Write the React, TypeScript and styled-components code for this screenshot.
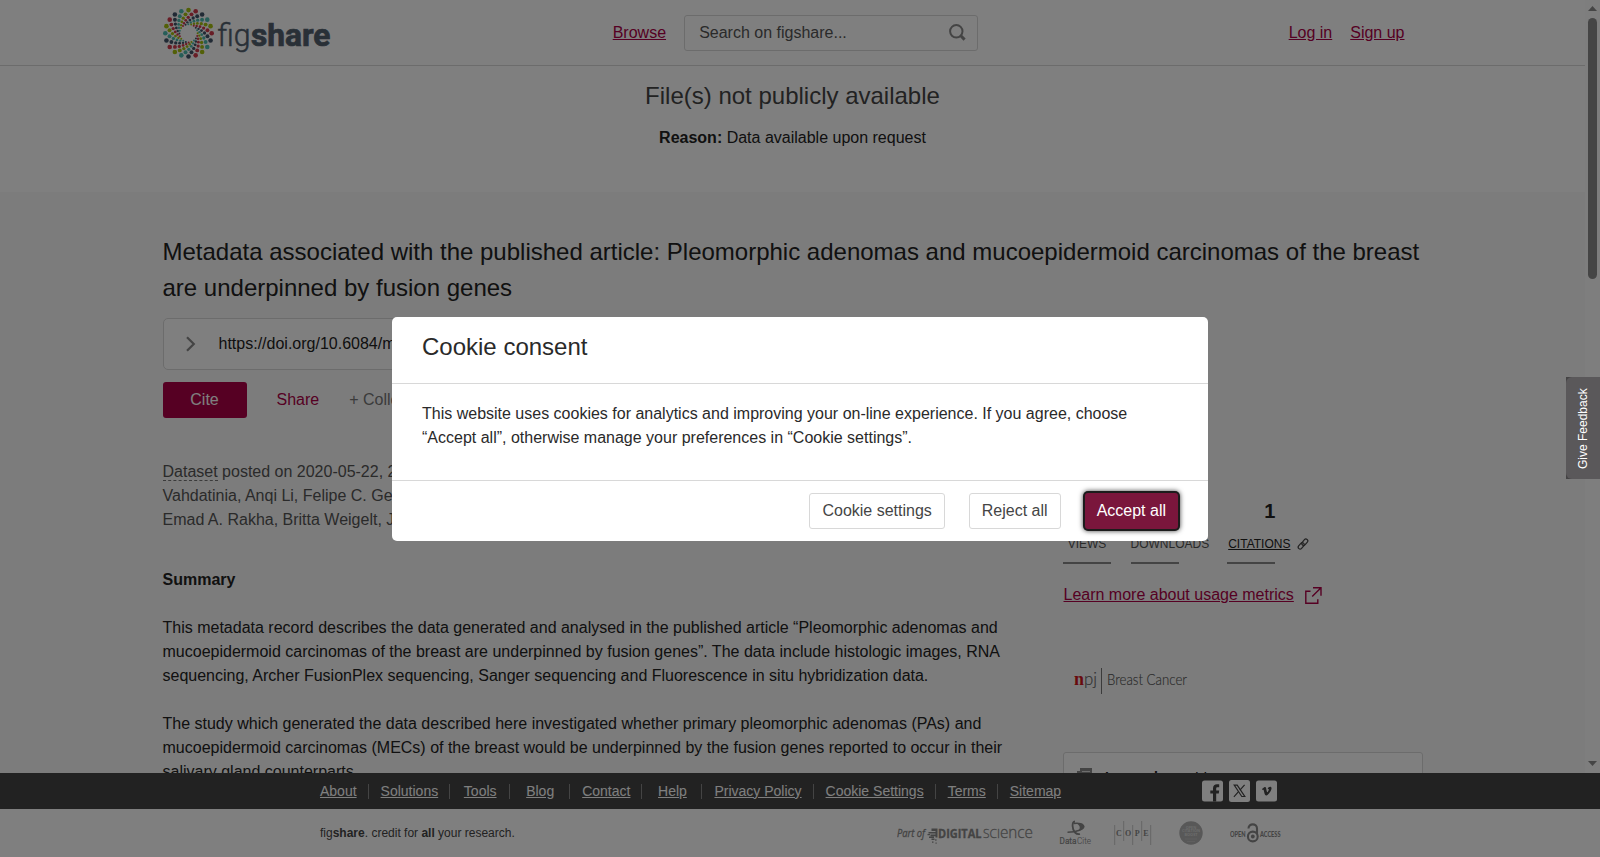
import React from "react";
import styled, { createGlobalStyle, css } from "styled-components";

const GlobalStyle = createGlobalStyle`
  * { box-sizing: border-box; }
  html, body { margin: 0; padding: 0; }
  body {
    font-family: "Liberation Sans", Arial, sans-serif;
    font-size: 16px;
    line-height: 24px;
    color: #222;
    background: #fff;
    overflow: hidden;
  }
  p, h1, h2 { margin: 0; font-weight: 400; }
  svg { display: block; flex: none; }
`;

const brand = "#ac0046";
const line = "#d8d8d8";

const Shell = styled.div`
  display: flex;
  flex-direction: column;
  height: 857px;
  width: 1600px;
`;
const Viewport = styled.div`
  display: flex;
  height: 773px;
  overflow: hidden;
`;
const Page = styled.div`
  width: 1585px;
  height: 773px;
  overflow: hidden;
  background: #f9f9f9;
`;
const Scrollbar = styled.div`
  width: 15px;
  height: 773px;
  padding: 6px 3px 7px;
  background: #fcfcfc;
  display: flex;
  flex-direction: column;
  align-items: center;
`;
const Thumb = styled.div`
  width: 9px;
  height: 261px;
  margin: 7px 0 auto;
  border-radius: 5px;
  background: #8b8b8b;
`;
const Header = styled.header`
  display: flex;
  align-items: center;
  height: 66px;
  padding: 0 180.5px 0 163px;
  background: #fff;
  border-bottom: 1px solid ${line};
`;
const TextLink = styled.a`
  color: ${brand};
  text-decoration: underline;
`;
const Browse = styled(TextLink)`
  margin-left: 279.7px;
`;
const Search = styled.div`
  display: flex;
  align-items: center;
  justify-content: space-between;
  width: 294px;
  height: 36px;
  margin-left: 17.6px;
  padding: 0 11px 0 14.5px;
  border: 1px solid ${line};
  border-radius: 3px;
  color: #555;
`;
const Account = styled.nav`
  display: flex;
  gap: 18px;
  margin-left: auto;
`;
const Notice = styled.section`
  height: 126px;
  padding-top: 15px;
  background: #fff;
  text-align: center;
`;
const NoticeTitle = styled.h2`
  font-size: 24px;
  line-height: 30px;
  color: #454545;
  margin-bottom: 15px;
`;
const Content = styled.main`
  padding: 42px 162px 0 162.5px;
`;
const Title = styled.h1`
  font-size: 24px;
  line-height: 36px;
`;
const Doi = styled.div`
  display: flex;
  align-items: center;
  width: 845px;
  height: 52px;
  margin-top: 12px;
  padding-left: 21.5px;
  gap: 21.5px;
  border: 1px solid ${line};
  border-radius: 5px;
  background: #fff;
`;
const Actions = styled.div`
  display: flex;
  align-items: center;
  height: 36px;
  margin-top: 12px;
`;
const Cite = styled.button`
  width: 84px;
  height: 36px;
  border: 0;
  border-radius: 3px;
  background: ${brand};
  color: #fff;
  font: inherit;
  padding: 0;
`;
const Share = styled.span`
  margin-left: 30px;
  color: ${brand};
`;
const Collect = styled.span`
  margin-left: 30px;
  color: #777;
`;
const Columns = styled.div`
  display: flex;
  justify-content: space-between;
  margin-top: 42px;
`;
const Article = styled.div`
  width: 845px;
`;
const Authors = styled.p`
  color: #555;
  white-space: nowrap;
  margin-bottom: 36px;
`;
const Kind = styled.span`
  border-bottom: 1px dashed #777;
`;
const Paragraph = styled.p`
  margin-bottom: 24px;
`;
const Aside = styled.aside`
  width: 360px;
  padding-top: 39px;
`;
const Stats = styled.div`
  display: flex;
`;
const Stat = styled.div`
  min-width: 48px;
  text-align: center;
  margin-right: 19.5px;
  & + & { margin-right: 18px; }
`;
const StatValue = styled.div`
  height: 24px;
  padding-left: 3px;
  font-size: 20px;
  font-weight: 700;
`;
const StatLabel = styled.div<{ $link?: boolean }>`
  display: flex;
  justify-content: center;
  gap: 7px;
  height: 18px;
  margin-top: 12px;
  line-height: 18px;
  font-size: 12px;
  color: #555;
  ${(p) => p.$link && css`
    padding-left: 1px;
    color: #222;
    span { text-decoration: underline; }
  `}
`;
const StatBar = styled.div`
  width: 48px;
  height: 2px;
  margin-top: 9px;
  background: #888;
`;
const Metrics = styled.div`
  display: flex;
  align-items: center;
  gap: 11px;
  margin-top: 19px;
  padding-left: 0.5px;
`;
const Journal = styled.div`
  padding-left: 10px;
  margin-top: 60px;
`;
const Related = styled.div`
  display: flex;
  gap: 13px;
  margin-top: 57px;
  height: 120px;
  width: 360px;
  padding: 15px 13px;
  border: 1px solid ${line};
  border-radius: 3px;
  background: #fff;
  font-size: 14px;
  line-height: 18px;
  font-weight: 700;
`;
const FooterNav = styled.nav`
  display: flex;
  align-items: center;
  height: 36px;
  padding-left: 308px;
  background: #454545;
`;
const NavItem = styled.div<{ $last?: boolean }>`
  min-width: 60px;
  height: 15px;
  padding: 0 11px 0 12px;
  text-align: center;
  font-size: 14px;
  line-height: 14px;
  border-right: ${(p) => (p.$last ? "0" : "1px solid #888")};
  a { color: #fff; text-decoration: underline; }
`;
const Social = styled.div`
  display: flex;
  gap: 6px;
  margin-left: 130px;
`;
const FooterBottom = styled.footer`
  display: flex;
  align-items: center;
  height: 48px;
  padding-left: 320px;
  background: #fff;
  font-size: 12px;
  color: #454545;
`;
const Partners = styled.div`
  display: flex;
  align-items: center;
  gap: 25px;
  margin-left: 382px;
`;
const Overlay = styled.div`
  position: fixed;
  inset: 0;
  display: flex;
  align-items: flex-start;
  justify-content: center;
  padding-top: 317px;
  background: rgba(0, 0, 0, 0.5);
`;
const Modal = styled.div`
  width: 816px;
  height: 224px;
  border-radius: 5px;
  background: #fff;
  color: #2a2a2a;
`;
const ModalTitle = styled.h2`
  height: 67px;
  padding: 12px 30px 0;
  font-size: 24px;
  line-height: 36px;
  border-bottom: 1px solid ${line};
`;
const ModalBody = styled.p`
  height: 97px;
  padding: 18px 30px 0;
  border-bottom: 1px solid ${line};
`;
const ModalActions = styled.div`
  display: flex;
  justify-content: flex-end;
  gap: 24px;
  padding: 12px 30px 0;
`;
const Button = styled.button<{ $primary?: boolean }>`
  height: 36px;
  padding: 0 12px;
  border: 1px solid ${line};
  border-radius: 3px;
  background: #fff;
  color: #454545;
  font: inherit;
  ${(p) => p.$primary && css`
    border: 0;
    background: #7a163c;
    color: #fff;
    box-shadow: 0 0 0 2px #1c1c1c, 0 0 5px 2px rgba(0, 0, 0, 0.75);
  `}
`;
const Feedback = styled.div`
  position: fixed;
  right: 0;
  top: 377px;
  width: 34px;
  height: 102px;
  background: #444344;
`;
const FeedbackLabel = styled.div`
  width: 34px;
  height: 102px;
  padding-bottom: 1px;
  border-radius: 0 6px 6px 0;
  background: #5a585a;
  color: #fff;
  font-size: 12px;
  line-height: 35px;
  text-align: center;
  white-space: nowrap;
  writing-mode: vertical-rl;
  transform: rotate(180deg);
`;

const swirlColors = ["#a6c010", "#d03a4c", "#43556a", "#4fbcb0"];
const swirlSteps = [
  { r: 23.2, a: 0, d: 2.3 },
  { r: 19.2, a: -9, d: 1.95 },
  { r: 16, a: -19, d: 1.65 },
  { r: 13.3, a: -30, d: 1.4 },
  { r: 11, a: -42, d: 1.2 },
  { r: 9.1, a: -55, d: 1 },
];

function Logo() {
  const dots: React.ReactNode[] = [];
  for (let i = 0; i < 20; i++) {
    swirlSteps.forEach((s, j) => {
      const t = ((i * 18 - 90 + s.a) * Math.PI) / 180;
      dots.push(
        <circle key={`${i}-${j}`} cx={25.5 + s.r * Math.cos(t)} cy={27.3 + s.r * Math.sin(t)} r={s.d} fill={swirlColors[i % 4]} />
      );
    });
  }
  return (
    <svg width="170" height="54" viewBox="0 0 170 54">
      {dots}
      <g fill="#53616e" stroke="#53616e" fontFamily="Roboto, sans-serif" fontSize="32">
        <text x="54.5" y="39.5" fontWeight="300" textLength="33" lengthAdjust="spacingAndGlyphs" strokeWidth=".5">fig</text>
        <text x="88" y="39.5" fontWeight="700" textLength="79.5" lengthAdjust="spacingAndGlyphs" strokeWidth=".7">share</text>
      </g>
    </svg>
  );
}

const SearchIcon = () => (
  <svg width="17" height="17" viewBox="0 0 17 17" fill="none" stroke="#888">
    <circle cx="7.3" cy="7.3" r="6.2" strokeWidth="2" />
    <path d="M11.8 11.8 15.6 15.6" strokeWidth="3" />
  </svg>
);
const Chevron = () => (
  <svg width="12" height="16" viewBox="0 0 12 16" fill="none" stroke="#888" strokeWidth="2.2">
    <path d="M2 1.2 8.8 8l-6.800 6.800" />
  </svg>
);
const ChainSvg = styled.svg`
  margin-top: 3px;
`;
const ChainIcon = () => (
  <ChainSvg width="12" height="12" viewBox="0 0 12 12" fill="none" stroke="#454545" strokeWidth="1.2">
    <rect x="-3.6" y="-1.9" width="7.2" height="3.8" rx="1.9" transform="translate(7.8 4.2) rotate(-50)" />
    <rect x="-3.6" y="-1.9" width="7.2" height="3.8" rx="1.9" transform="translate(4.2 7.9) rotate(-50)" />
  </ChainSvg>
);
const ExternalIcon = () => (
  <svg width="17" height="17" viewBox="0 0 17 17" fill="none" stroke={brand} strokeWidth="1.4">
    <path d="M5.5 4.3H.8v12h12v-4M8 .8h8v8M16 .8 7.2 9.6" />
  </svg>
);
const NpjLogo = () => (
  <svg width="120" height="28" viewBox="0 0 120 28">
    <text x="1" y="18" fontFamily="Liberation Serif, serif" fontWeight="700" fontSize="19" fill="#d0141c" textLength="10" lengthAdjust="spacingAndGlyphs">n</text>
    <text x="11" y="18" fontFamily="Lato, sans-serif" fontWeight="300" fontSize="18" fill="#666" textLength="13" lengthAdjust="spacingAndGlyphs" stroke="#666" strokeWidth=".2">pj</text>
    <path d="M28.5 1v26" stroke="#777" />
    <text x="34" y="18" fontFamily="Lato, sans-serif" fontWeight="300" fontSize="15" fill="#555" textLength="80" lengthAdjust="spacingAndGlyphs" stroke="#555" strokeWidth=".15">Breast Cancer</text>
  </svg>
);
const PaperIcon = () => (
  <svg width="15" height="14" viewBox="0 0 15 14">
    <path d="M3 0H15v14H0V3h3z" fill="#888" />
    <path d="M5 3.5h8" stroke="#ddd" />
    <path d="M5 6h8" stroke="#ddd" />
  </svg>
);
const Facebook = () => (
  <svg width="21" height="22" viewBox="0 0 21 22">
    <rect y=".5" width="21" height="21" rx="2.5" fill="#fff" />
    <path d="M11 21.5v-8H8.3v-3H11V8.3c0-2.7 1.6-4 4-4h2.200v3h-1.600c-1 0-1.400.5-1.400 1.400v1.800h3l-.4 3h-2.600v8z" fill="#454545" />
  </svg>
);
const XLogo = () => (
  <svg width="21" height="22" viewBox="0 0 21 22">
    <rect width="21" height="22" rx="2.5" fill="#fff" />
    <path d="M5.2 5.2h3l7.6 11.3h-3z" fill="none" stroke="#454545" strokeWidth="1.2" />
    <path d="M15.6 4.8l-4.7 5.3M9.5 11.7l-4.6 5.2" stroke="#454545" strokeWidth="1.2" />
  </svg>
);
const Vimeo = () => (
  <svg width="21" height="22" viewBox="0 0 21 22">
    <rect y=".5" width="21" height="21" rx="2.5" fill="#fff" />
    <path d="M6 9l2.200-1.800c1.200-.7 1.800.1 2 1.400.4 2 .6 3.600 1.100 3.600.5 0 1.600-2 1.500-2.700-.1-.7-.8-.6-1.300-.3.6-2 1.800-2.700 2.900-2.500 1.300.2 1.300 1.500.9 2.800-.8 2.500-3.200 5.500-4.800 5.900-1 .2-1.600-.6-2-1.900L7.600 9.700l-1 .3z" fill="#454545" />
  </svg>
);

const DigitalScience = () => (
  <svg width="137" height="30" viewBox="0 0 137 30" fill="#888">
    <text x="0" y="18.5" fontFamily="Open Sans, sans-serif" fontStyle="italic" fontSize="10" textLength="28" lengthAdjust="spacingAndGlyphs" stroke="#888" strokeWidth=".3">Part of</text>
    <path d="M34.5 10.500H40.500v9H38.500v-1.300H33.500v-1.600h5v-1H31.500v-1.500h7v-1.200h-4zM30.500 16h2.500v1.200h-2.500zM32 18.500h5v1.500h-5zM34.500 20.500h3v1.500h-3zM38.200 21.300h1.300v1.500h-1.300zM35 23.500h1.500v1.300H35zM38.500 24.500h1.200v1.200h-1.200z" />
    <text x="41" y="19.5" fontFamily="Open Sans, sans-serif" fontWeight="700" fontSize="12.5" textLength="43.5" lengthAdjust="spacingAndGlyphs" stroke="#888" strokeWidth=".3">DIGITAL</text>
    <text x="86" y="19.5" fontFamily="Open Sans, sans-serif" fontWeight="300" fontSize="12.5" stroke="#888" strokeWidth=".3" textLength="50" lengthAdjust="spacingAndGlyphs">SCI<tspan fontSize="16">ence</tspan></text>
  </svg>
);
const DataCite = () => (
  <svg width="33" height="28" viewBox="0 0 33 28" fill="#888">
    <g fill="none" stroke="#888">
      <path d="M16 2.5C12.5 3 13 10 16 13.5c1.200 1.200 3 2 5 1.500" strokeWidth="1.8" />
      <path d="M15 4.500c5-.8 9.500.5 9.500 3S19 13 8.500 13.200" strokeWidth="1.6" />
    </g>
    <path d="M18 4.500c4 0 7.500 1.500 7.500 3.200 0 1.800-3.500 3.600-6.500 4.300 2.500-2.500 2.500-5-1-7.500z" />
    <text x=".5" y="25" fontFamily="Roboto, sans-serif" fontSize="9" textLength="17" lengthAdjust="spacingAndGlyphs" stroke="#888" strokeWidth=".2">Data</text>
    <text x="18" y="25" fontFamily="Roboto, sans-serif" fontWeight="300" fontSize="9" textLength="14" lengthAdjust="spacingAndGlyphs" stroke="#888" strokeWidth=".1">Cite</text>
  </svg>
);
const CopeSvg = styled.svg`
  margin-left: -3px;
`;
const Cope = () => (
  <CopeSvg width="38" height="26" viewBox="0 0 38 26">
    <path d="M.7 5v20M9.7 1v20M18.7 5v20M27.7 1v20M36.7 5v20" stroke="#bbb" strokeWidth=".8" />
    <g fill="#888" fontFamily="Liberation Serif, serif" fontSize="8" fontWeight="700" textAnchor="middle">
      <text x="5" y="15.5">C</text>
      <text x="14.2" y="15.5">O</text>
      <text x="23.2" y="15.5">P</text>
      <text x="32" y="15.5">E</text>
    </g>
  </CopeSvg>
);
const BadgeSvg = styled.svg`
  margin: 0 2px;
`;
const Badge = () => (
  <BadgeSvg width="24" height="26" viewBox="0 0 24 26">
    <circle cx="12" cy="13" r="11.7" fill="#b0b0b0" />
    <g fill="#d8d8d8" fontFamily="Open Sans, sans-serif" fontSize="3.8" fontWeight="700" textAnchor="middle">
      <text x="12" y="8.5">OPEN</text>
      <text x="12" y="12.2">CITATION</text>
      <text x="12" y="15.9">BOOST</text>
    </g>
    <path d="M6 19h12M8 21.5h8" stroke="#c8c8c8" strokeWidth=".6" />
  </BadgeSvg>
);
const OpenAccess = () => (
  <svg width="52" height="22" viewBox="0 0 52 22">
    <g fill="#888" fontFamily="Lato, sans-serif" fontSize="6.5" fontWeight="900">
      <text x="0" y="15" textLength="15.5" lengthAdjust="spacingAndGlyphs">OPEN</text>
      <text x="30" y="15" textLength="20.5" lengthAdjust="spacingAndGlyphs">ACCESS</text>
    </g>
    <g fill="none" stroke="#888" strokeWidth="2.1">
      <circle cx="22.800" cy="14.500" r="4.900" />
      <path d="M18.500 6.500c0-5.500 8.500-5.500 8.500 0v5.500" />
    </g>
    <circle cx="22.800" cy="14.500" r="1.900" fill="#888" />
  </svg>
);

const links = ["About", "Solutions", "Tools", "Blog", "Contact", "Help", "Privacy Policy", "Cookie Settings", "Terms", "Sitemap"];

export default function App() {
  return (
    <Shell>
      <GlobalStyle />
      <Viewport>
        <Page>
          <Header>
            <Logo />
            <Browse>Browse</Browse>
            <Search>
              Search on figshare...
              <SearchIcon />
            </Search>
            <Account>
              <TextLink>Log in</TextLink>
              <TextLink>Sign up</TextLink>
            </Account>
          </Header>
          <Notice>
            <NoticeTitle>File(s) not publicly available</NoticeTitle>
            <p><b>Reason:</b> Data available upon request</p>
          </Notice>
          <Content>
            <Title>
              Metadata associated with the published article: Pleomorphic adenomas and mucoepidermoid carcinomas of the breast are underpinned by fusion genes
            </Title>
            <Doi>
              <Chevron />
              https://doi.org/10.6084/m
            </Doi>
            <Actions>
              <Cite>Cite</Cite>
              <Share>Share</Share>
              <Collect>+ Collect</Collect>
            </Actions>
            <Columns>
              <Article>
                <Authors>
                  <Kind>Dataset</Kind> posted on 2020-05-22, 2<br />
                  Vahdatinia, Anqi Li, Felipe C. Gey<br />
                  Emad A. Rakha, Britta Weigelt, J
                </Authors>
                <Paragraph><b>Summary</b></Paragraph>
                <Paragraph>
                  This metadata record describes the data generated and analysed in the published article “Pleomorphic adenomas and mucoepidermoid carcinomas of the breast are underpinned by fusion genes”. The data include histologic images, RNA sequencing, Archer FusionPlex sequencing, Sanger sequencing and Fluorescence in situ hybridization data.
                </Paragraph>
                <Paragraph>
                  The study which generated the data described here investigated whether primary pleomorphic adenomas (PAs) and mucoepidermoid carcinomas (MECs) of the breast would be underpinned by the fusion genes reported to occur in their salivary gland counterparts.
                </Paragraph>
              </Article>
              <Aside>
                <Stats>
                  <Stat>
                    <StatValue />
                    <StatLabel><span>VIEWS</span></StatLabel>
                    <StatBar />
                  </Stat>
                  <Stat>
                    <StatValue />
                    <StatLabel><span>DOWNLOADS</span></StatLabel>
                    <StatBar />
                  </Stat>
                  <Stat>
                    <StatValue>1</StatValue>
                    <StatLabel $link><span>CITATIONS</span><ChainIcon /></StatLabel>
                    <StatBar />
                  </Stat>
                </Stats>
                <Metrics>
                  <TextLink>Learn more about usage metrics</TextLink>
                  <ExternalIcon />
                </Metrics>
                <Journal><NpjLogo /></Journal>
                <Related>
                  <PaperIcon />
                  Is supplement to
                </Related>
              </Aside>
            </Columns>
          </Content>
        </Page>
        <Scrollbar>
          <svg width="9" height="5" viewBox="0 0 9 5"><path d="M0 5 4.5 0 9 5z" fill="#8b8b8b" /></svg>
          <Thumb />
          <svg width="9" height="5" viewBox="0 0 9 5"><path d="M0 0 4.5 5 9 0z" fill="#8b8b8b" /></svg>
        </Scrollbar>
      </Viewport>
      <FooterNav>
        {links.map((l, i) => (
          <NavItem key={l} $last={i === links.length - 1}><a>{l}</a></NavItem>
        ))}
        <Social>
          <Facebook />
          <XLogo />
          <Vimeo />
        </Social>
      </FooterNav>
      <FooterBottom>
        <span>fig<b>share</b>. credit for <b>all</b> your research.</span>
        <Partners>
          <DigitalScience />
          <DataCite />
          <Cope />
          <Badge />
          <OpenAccess />
        </Partners>
      </FooterBottom>
      <Overlay>
        <Modal>
          <ModalTitle>Cookie consent</ModalTitle>
          <ModalBody>
            This website uses cookies for analytics and improving your on-line experience. If you agree, choose “Accept all”, otherwise manage your preferences in “Cookie settings”.
          </ModalBody>
          <ModalActions>
            <Button>Cookie settings</Button>
            <Button>Reject all</Button>
            <Button $primary>Accept all</Button>
          </ModalActions>
        </Modal>
      </Overlay>
      <Feedback><FeedbackLabel>Give Feedback</FeedbackLabel></Feedback>
    </Shell>
  );
}
